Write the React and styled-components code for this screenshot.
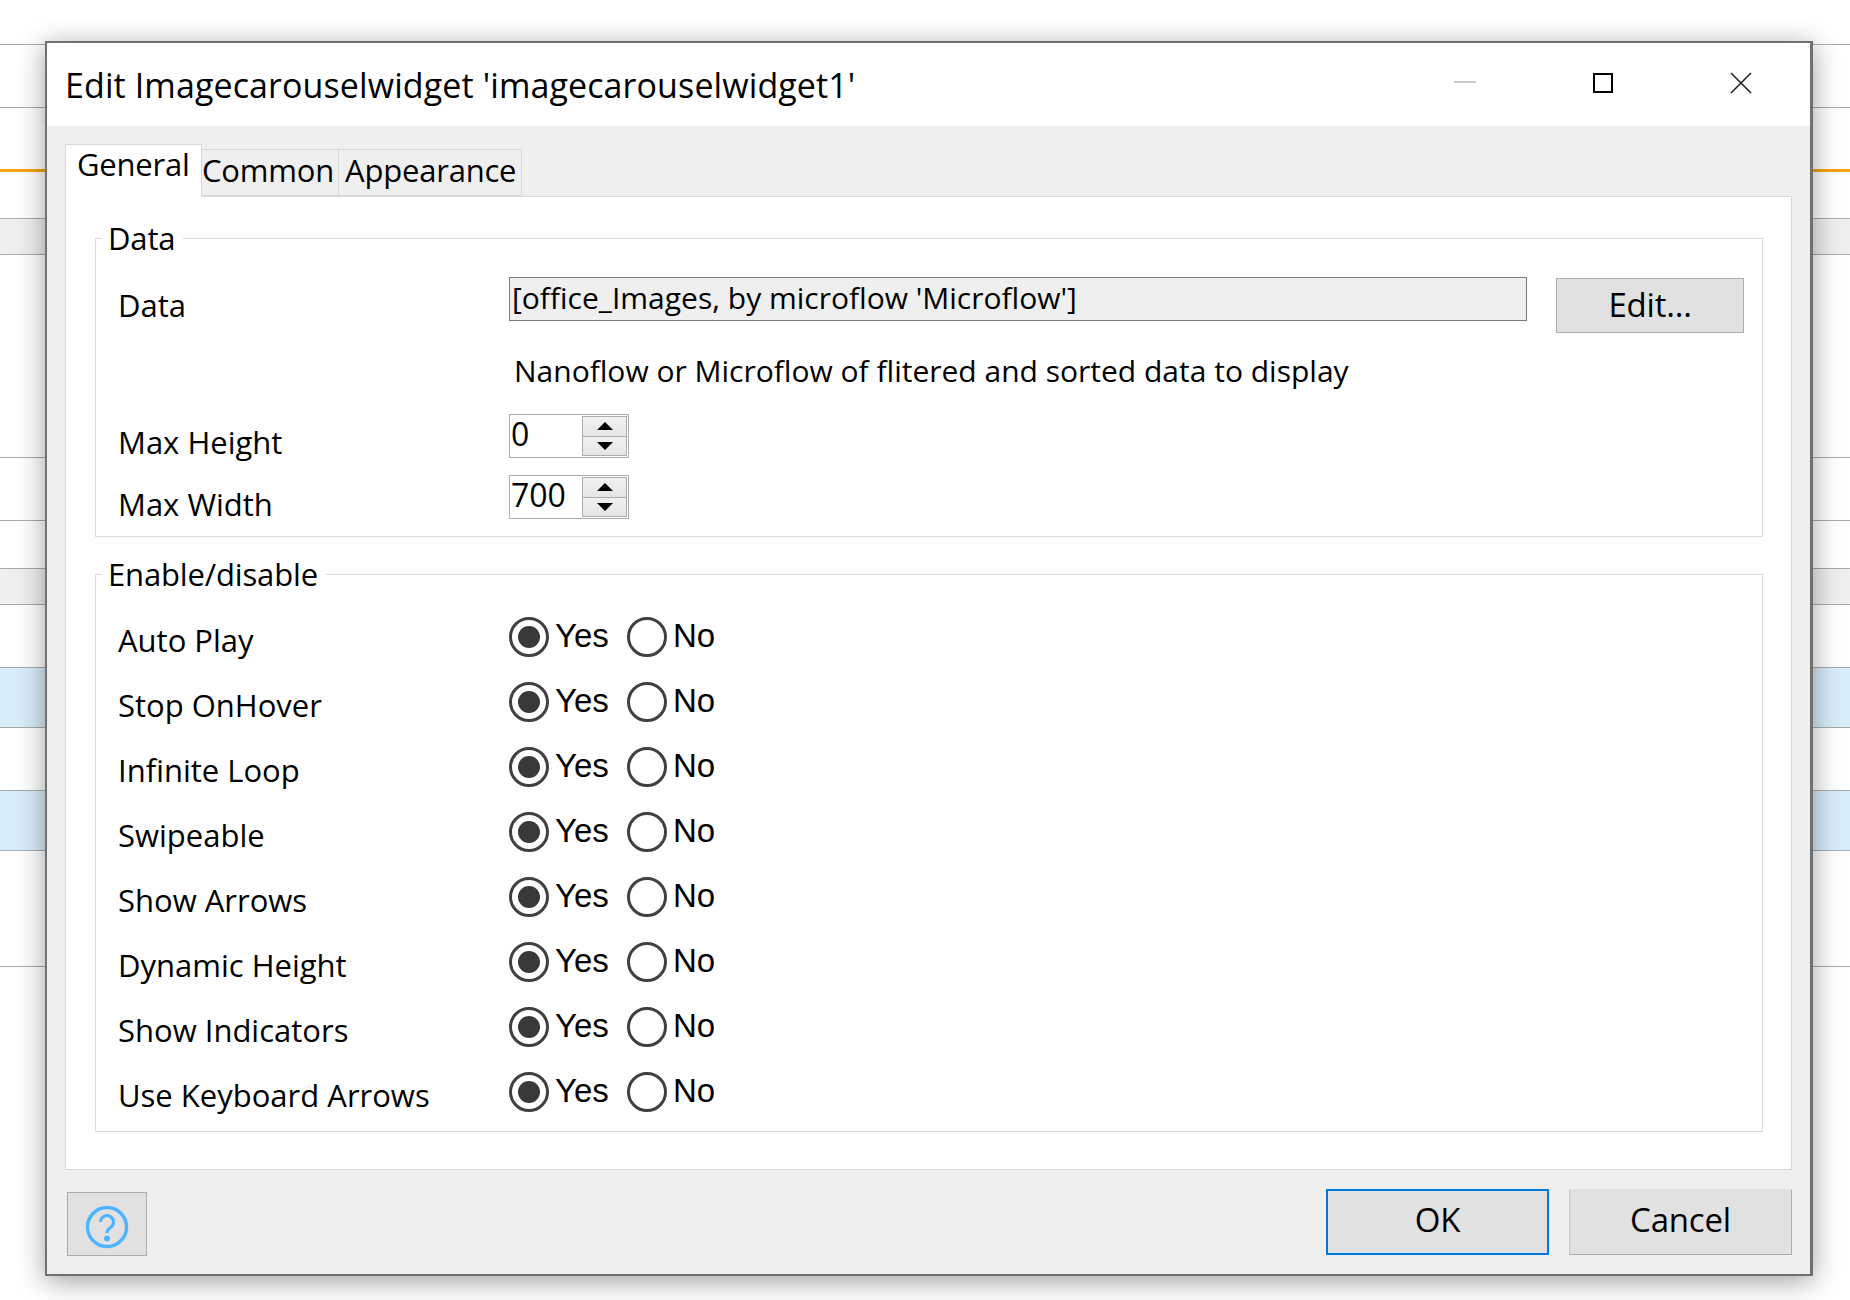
import React from 'react';
import styled, { createGlobalStyle } from 'styled-components';

const GlobalStyle = createGlobalStyle`
  html, body { margin: 0; padding: 0; background: #fff; }
  body { font-family: "Open Sans", "Noto Sans", sans-serif; color: #000; }
  * { box-sizing: border-box; }
`;

const Page = styled.div`
  position: relative;
  width: 1850px;
  height: 1300px;
  overflow: hidden;
  padding-top: 44px;
`;

const BackRow = styled.div`
  height: ${p => p.$h}px;
  border-top: ${p => (p.$orange ? '3px solid #f5a30f' : '1px solid #aaa')};
  background: ${p => (p.$tone === 'grey' ? '#efefef' : p.$tone === 'blue' ? '#d9ecfa' : '#fff')};
`;

const Dialog = styled.div`
  position: absolute;
  left: 45px;
  top: 41px;
  width: 1768px;
  height: 1235px;
  display: flex;
  flex-direction: column;
  background: #efefef;
  border: 2px solid #707070;
  border-right-width: 3px;
  box-shadow: 0 5px 26px rgba(0, 0, 0, 0.38);
`;

const TitleBar = styled.div`
  height: 83px;
  flex: none;
  display: flex;
  align-items: center;
  background: #fff;
  padding-left: 18px;
`;

const Title = styled.div`
  flex: 1;
  font-size: 34px;
  letter-spacing: 0.1px;
  margin-top: 1px;
`;

const WinButton = styled.div`
  width: 138px;
  height: 40px;
  display: flex;
  align-items: center;
  justify-content: center;
  margin-top: -4px;
`;

const WinButtons = styled.div`
  display: flex;
`;

const Body = styled.div`
  flex: 1;
  display: flex;
  flex-direction: column;
  padding: 18px 18px 0 18px;
`;

const TabStrip = styled.div`
  display: flex;
  align-items: flex-end;
  height: 52px;
  position: relative;
  z-index: 1;
`;

const Tab = styled.div`
  height: ${p => (p.$active ? 53 : 47)}px;
  margin-bottom: ${p => (p.$active ? -1 : 0)}px;
  width: ${p => p.$w}px;
  border: 1px solid #d9d9d9;
  border-left-width: ${p => (p.$active ? 1 : 0)}px;
  border-bottom-width: ${p => (p.$active ? 0 : 1)}px;
  background: ${p => (p.$active ? '#fff' : '#efefef')};
  font-size: 31px;
  letter-spacing: -0.2px;
  line-height: ${p => (p.$active ? 38 : 41)}px;
  padding-left: ${p => p.$pad}px;
  white-space: nowrap;
`;

const Panel = styled.div`
  height: 974px;
  flex: none;
  background: #fff;
  border: 1px solid #d9d9d9;
  padding: 21px 28px 0 29px;
  display: flex;
  flex-direction: column;
`;

const Group = styled.fieldset`
  margin: 0 0 17px;
  padding: 0;
  height: ${p => p.$h}px;
  flex: none;
  border: 1.5px solid #dcdcdc;
  min-width: 0;
  position: relative;
`;

const Legend = styled.legend`
  font-size: 31px;
  letter-spacing: -0.15px;
  padding: 0 8px 0 6px;
  margin-left: 6px;
  line-height: 40px;
  height: 40px;
`;

const Label = styled.div`
  width: 413px;
  flex: none;
  padding-left: 22px;
  padding-top: ${p => p.$top}px;
  font-size: 31px;
  line-height: 40px;
  white-space: nowrap;
`;

const DataRow = styled.div`
  display: flex;
  align-items: flex-start;
  margin-top: 19px;
`;

const ReadOnlyField = styled.div`
  width: 1018px;
  height: 44px;
  flex: none;
  background: #efefef;
  border: 1.5px solid #7a7a7a;
  font-size: 30px;
  line-height: 40px;
  padding-left: 2px;
  white-space: nowrap;
`;

const PlainButton = styled.div`
  width: ${p => p.$w}px;
  height: ${p => p.$h}px;
  flex: none;
  display: flex;
  align-items: center;
  justify-content: center;
  background: #e1e1e1;
  border: ${p => (p.$focus ? '2px solid #0078d7' : '1.5px solid #adadad')};
  font-size: 33px;
  letter-spacing: -0.2px;
  padding-bottom: 5px;
`;

const EditButton = styled(PlainButton)`
  margin: 1px 0 0 29px;
  padding-bottom: 3px;
`;

const HelpText = styled.div`
  margin: 18px 0 0 418px;
  font-size: 30px;
  line-height: 40px;
`;

const SpinRow = styled.div`
  display: flex;
  align-items: flex-start;
  margin-top: ${p => p.$mt}px;
`;

const SpinBox = styled.div`
  width: 120px;
  height: 44px;
  display: flex;
  border: 1.5px solid #adadad;
  background: #fff;
`;

const SpinValue = styled.div`
  flex: 1;
  font-size: 32px;
  line-height: 38px;
  padding-left: 1px;
`;

const SpinButtons = styled.div`
  width: 47px;
  display: flex;
  flex-direction: column;
  gap: 1px;
  padding: 1px;
  background: #adadad;
  border: 1px solid #fff;
`;

const SpinButton = styled.div`
  flex: 1;
  display: flex;
  align-items: center;
  justify-content: center;
  background: linear-gradient(#f1f1f1, #e5e5e5);
`;

const Arrow = styled.div`
  width: 0;
  height: 0;
  border-left: 8px solid transparent;
  border-right: 8px solid transparent;
  ${p => (p.$down ? 'border-top: 8px solid #000;' : 'border-bottom: 8px solid #000;')}
`;

const RadioRows = styled.div`
  margin-top: 23px;
`;

const RadioRow = styled.div`
  display: flex;
  align-items: flex-start;
  height: 65px;
`;

const RadioCircle = styled.div`
  width: 40px;
  height: 40px;
  flex: none;
  border-radius: 50%;
  border: 3px solid #404040;
  display: flex;
  align-items: center;
  justify-content: center;
  &::after {
    content: '';
    display: ${p => (p.$on ? 'block' : 'none')};
    width: 22px;
    height: 22px;
    border-radius: 50%;
    background: #383838;
  }
`;

const RadioOption = styled.div`
  display: flex;
  align-items: flex-start;
  width: ${p => p.$w}px;
`;

const RadioText = styled.div`
  font-family: "Liberation Sans", sans-serif;
  font-size: 33px;
  line-height: 36px;
  margin: 1px 0 0 6px;
`;

const Footer = styled.div`
  display: flex;
  align-items: flex-start;
  flex: 1;
  padding: 19px 0 0 2px;
`;

const HelpButton = styled(PlainButton)`
  margin-top: 3px;
  padding: 5px 0 0;
`;

const Spacer = styled.div`
  flex: 1;
`;

const CancelButton = styled(PlainButton)`
  margin-left: 20px;
  border-left-color: #c8c8c8;
  border-top-color: #e1e1e1;
`;

const backRows = [
  { h: 63 }, { h: 62 }, { h: 49, orange: true }, { h: 36, tone: 'grey' }, { h: 203 },
  { h: 63 }, { h: 48 }, { h: 36, tone: 'grey' }, { h: 63 }, { h: 60, tone: 'blue' },
  { h: 63 }, { h: 60, tone: 'blue' }, { h: 116 }, { h: 300 },
];

const switches = [
  'Auto Play', 'Stop OnHover', 'Infinite Loop', 'Swipeable',
  'Show Arrows', 'Dynamic Height', 'Show Indicators', 'Use Keyboard Arrows',
];

const Spinner = ({ value }) => (
  <SpinBox>
    <SpinValue>{value}</SpinValue>
    <SpinButtons>
      <SpinButton><Arrow /></SpinButton>
      <SpinButton><Arrow $down /></SpinButton>
    </SpinButtons>
  </SpinBox>
);

const App = () => (
  <Page>
    <GlobalStyle />
    {backRows.map((r, i) => (
      <BackRow key={i} $h={r.h} $tone={r.tone} $orange={r.orange} />
    ))}
    <Dialog>
      <TitleBar>
        <Title>Edit Imagecarouselwidget 'imagecarouselwidget1'</Title>
        <WinButtons>
          <WinButton>
            <svg width="22" height="3"><rect width="22" height="2" y="0" fill="#ccc" /></svg>
          </WinButton>
          <WinButton>
            <svg width="20" height="20"><rect x="1" y="1" width="18" height="18" fill="none" stroke="#000" strokeWidth="2" /></svg>
          </WinButton>
          <WinButton>
            <svg width="22" height="22"><path d="M1 1 L21 21 M21 1 L1 21" stroke="#222" strokeWidth="1.6" fill="none" /></svg>
          </WinButton>
        </WinButtons>
      </TitleBar>
      <Body>
        <TabStrip>
          <Tab $active $w={137} $pad={11}>General</Tab>
          <Tab $w={137} $pad={0}>Common</Tab>
          <Tab $w={183} $pad={6}>Appearance</Tab>
        </TabStrip>
        <Panel>
          <Group $h={319}>
            <Legend>Data</Legend>
            <DataRow>
              <Label $top={8}>Data</Label>
              <ReadOnlyField>[office_Images, by microflow 'Microflow']</ReadOnlyField>
              <EditButton $w={188} $h={55}>Edit...</EditButton>
            </DataRow>
            <HelpText>Nanoflow or Microflow of flitered and sorted data to display</HelpText>
            <SpinRow $mt={23}>
              <Label $top={8}>Max Height</Label>
              <Spinner value="0" />
            </SpinRow>
            <SpinRow $mt={13}>
              <Label $top={9}>Max Width</Label>
              <Spinner value="700" />
            </SpinRow>
          </Group>
          <Group $h={578}>
            <Legend>Enable/disable</Legend>
            <RadioRows>
              {switches.map(name => (
                <RadioRow key={name}>
                  <Label $top={3}>{name}</Label>
                  <RadioOption $w={118}><RadioCircle $on /><RadioText>Yes</RadioText></RadioOption>
                  <RadioOption $w={100}><RadioCircle /><RadioText>No</RadioText></RadioOption>
                </RadioRow>
              ))}
            </RadioRows>
          </Group>
        </Panel>
        <Footer>
          <HelpButton $w={80} $h={64}>
            <svg width="44" height="44" viewBox="0 0 44 44" fill="none">
              <circle cx="22" cy="22" r="19.5" stroke="#4db4ff" strokeWidth="3.4" />
              <path d="M15.5 17 a6.5 6.5 0 1 1 10 5.5 c-2.2 1.4-3.5 2.6-3.5 5.5" stroke="#4db4ff" strokeWidth="3" />
              <circle cx="22" cy="33.5" r="2.9" fill="#4db4ff" />
            </svg>
          </HelpButton>
          <Spacer />
          <PlainButton $focus $w={223} $h={66}>OK</PlainButton>
          <CancelButton $w={223} $h={66}>Cancel</CancelButton>
        </Footer>
      </Body>
    </Dialog>
  </Page>
);

export default App;
